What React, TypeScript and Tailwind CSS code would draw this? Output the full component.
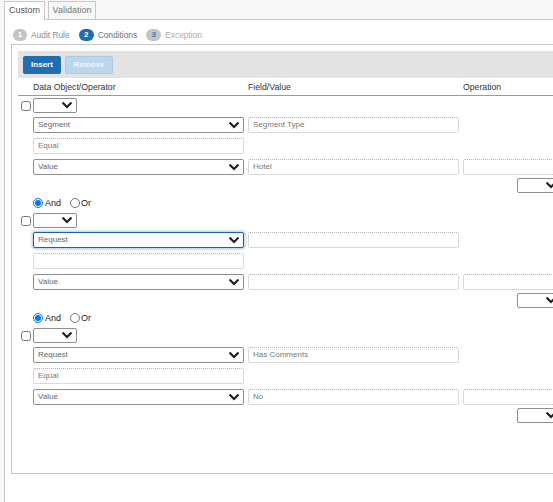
import React from "react";

const Chevron = () => (
  <svg width="10" height="7" viewBox="0 0 10 7" className="shrink-0">
    <path d="M1.3 1.3 L5 5 L8.7 1.3" fill="none" stroke="#1f1f1f" strokeWidth="2.1" strokeLinecap="square" />
  </svg>
);

function Select({
  label = "",
  wide = true,
  focused = false,
  className = "",
}: {
  label?: string;
  wide?: boolean;
  focused?: boolean;
  className?: string;
}) {
  const border = focused
    ? "border-[#1d5fa8] shadow-[0_0_3px_1px_rgba(90,150,210,0.55)]"
    : "border-[#8e8e8e]";
  return (
    <div
      className={`flex shrink-0 items-center justify-between rounded-[2px] border bg-white pl-[4px] pr-[4px] text-[8px] leading-none text-[#666] ${border} ${
        wide ? "h-[16px] w-[211px]" : "h-[15px] w-[44px]"
      } ${className}`}
    >
      <span>{label}</span>
      <Chevron />
    </div>
  );
}

function Field({ value = "", className = "" }: { value?: string; className?: string }) {
  return (
    <div
      className={`flex h-[16px] w-[211px] shrink-0 items-center rounded-[2px] border border-dotted border-[#b4b4b4] bg-white pl-[4px] text-[8px] leading-none text-[#777] ${className}`}
    >
      {value}
    </div>
  );
}

type Group = {
  object: string;
  field: string;
  operator: string;
  value: string;
  focused?: boolean;
};

const groups: Group[] = [
  { object: "Segment", field: "Segment Type", operator: "Equal", value: "Hotel" },
  { object: "Request", field: "", operator: "", value: "", focused: true },
  { object: "Request", field: "Has Comments", operator: "Equal", value: "No" },
];

function AndOr({ name }: { name: string }) {
  return (
    <div className="mt-[5px] flex h-[10px] items-center pl-[15px] text-[9px] leading-none text-[#222]">
      <input type="radio" name={name} defaultChecked className="m-0 h-[10px] w-[10px]" />
      <span className="ml-[2px]">And</span>
      <input type="radio" name={name} className="m-0 ml-[9px] h-[10px] w-[10px]" />
      <span className="ml-[1px]">Or</span>
    </div>
  );
}

function ConditionGroup({ g }: { g: Group }) {
  return (
    <div className="flex flex-col">
      <div className="flex h-[15px] items-center">
        <div className="flex w-[15px] items-center pl-[3px]">
          <input type="checkbox" className="m-0 h-[10px] w-[10px]" />
        </div>
        <Select wide={false} />
      </div>
      <div className="mt-[4px] flex gap-[4px] pl-[15px]">
        <Select label={g.object} focused={g.focused} />
        <Field value={g.field} />
      </div>
      <div className="mt-[5px] flex pl-[15px]">
        <Field value={g.operator} />
      </div>
      <div className="mt-[5px] flex gap-[4px] pl-[15px]">
        <Select label="Value" />
        <Field value={g.value} />
        <Field />
      </div>
      <div className="mt-[3px] flex pl-[499px]">
        <Select wide={false} />
      </div>
    </div>
  );
}

export default function App() {
  return (
    <div className="h-[502px] w-[553px] overflow-hidden bg-[#f8f8f8] font-['Liberation_Sans',Arial,sans-serif]">
      {/* tabs */}
      <div className="flex h-[19px] items-end pl-[4px]">
        <div className="relative z-10 -mb-px flex h-[19px] w-[41px] items-center justify-center border border-b-0 border-[#c8c8c8] bg-white text-[9px] text-[#555]">
          Custom
        </div>
        <div className="ml-[3px] flex h-[18px] w-[48px] items-center justify-center border border-b-0 border-[#c8c8c8] bg-[#f8f8f8] text-[9px] text-[#777]">
          Validation
        </div>
      </div>
      {/* panel */}
      <div className="ml-[4px] h-[483px] w-[700px] border-l border-t border-[#c8c8c8] bg-white pl-[6px] pt-[8px]">
        {/* steps */}
        <div className="flex h-[14px] items-center pl-[2px] text-[8.4px] leading-none">
          <span className="flex h-[12px] w-[14px] items-center justify-center rounded-full bg-[#c4c4c4] text-[8px] font-bold text-white">
            1
          </span>
          <span className="ml-[4px] text-[#8a8a8a]">Audit Rule</span>
          <span className="ml-[9px] flex h-[12px] w-[15px] items-center justify-center rounded-full bg-[#1f6db3] text-[8px] font-bold text-white">
            2
          </span>
          <span className="ml-[4px] text-[#5d7690]">Conditions</span>
          <span className="ml-[9px] flex h-[12px] w-[15px] items-center justify-center rounded-full bg-[#c4c4c4] text-[8px] font-bold text-[#3b78c0]">
            3
          </span>
          <span className="ml-[4px] text-[#ababab]">Exception</span>
        </div>
        {/* inner box */}
        <div className="mt-[2px] h-[430px] w-[690px] border border-[#c6c6c6] px-[6px] pt-[6px]">
          {/* toolbar */}
          <div className="flex h-[27px] items-center gap-[4px] bg-[#e3e3e3] px-[5px]">
            <div className="flex h-[18px] w-[38px] items-center justify-center rounded-[2px] bg-[#1f6db3] text-[8px] font-bold text-white">
              Insert
            </div>
            <div className="flex h-[18px] w-[48px] items-center justify-center rounded-[2px] border border-[#a9c9e4] bg-[#bcd6ec] text-[8px] font-bold text-[#eef5fb]">
              Remove
            </div>
          </div>
          {/* header */}
          <div className="flex h-[18px] items-end border-b border-[#9a9a9a] pb-[3px] pl-[15px] text-[8.7px] leading-[10px] text-[#333]">
            <div className="w-[215px]">Data Object/Operator</div>
            <div className="w-[215px]">Field/Value</div>
            <div>Operation</div>
          </div>
          {/* groups */}
          <div className="flex flex-col pt-[2px]">
            {groups.map((g, i) => (
              <React.Fragment key={i}>
                {i > 0 && (
                  <div className="mb-[5px]">
                    <AndOr name={`andor-${i}`} />
                  </div>
                )}
                <ConditionGroup g={g} />
              </React.Fragment>
            ))}
          </div>
        </div>
      </div>
    </div>
  );
}
